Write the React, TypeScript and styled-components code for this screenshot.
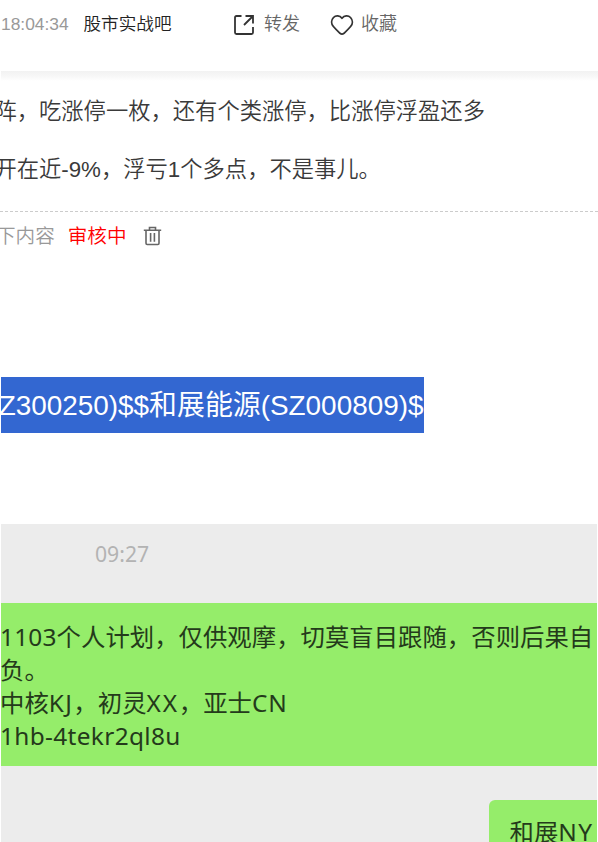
import React from "react";
import styled, { createGlobalStyle } from "styled-components";

const Global = createGlobalStyle`
  body { margin: 0; background: #fff; }
  * { box-sizing: border-box; }
`;

const Page = styled.main`
  display: flex;
  flex-direction: column;
  width: 598px;
  height: 842px;
  overflow: hidden;
  background: #fff;
  font-family: "Liberation Sans", "Noto Sans CJK SC", sans-serif;
  white-space: nowrap;
`;

const Header = styled.header`
  display: flex;
  flex: none;
  height: 71px;
  padding: 10px 0 0 1px;
  font-size: 17.6px;
  line-height: 28px;
  font-weight: 350;
`;

const Time = styled.time`
  width: 82.5px;
  color: #999;
  font-size: 17.4px;
`;

const Source = styled.span`
  width: 149.5px;
  color: #222;
`;

const Action = styled.button<{ $width: number }>`
  display: flex;
  align-items: center;
  flex: none;
  width: ${(p) => p.$width}px;
  height: 28px;
  padding: 0;
  border: 0;
  background: none;
  color: #666;
  font: inherit;
  font-size: 18px;

  svg {
    flex: none;
    margin-top: 1px;
  }
`;

const ActionLabel = styled.span<{ $gap: number }>`
  margin-left: ${(p) => p.$gap}px;
`;

const Divider = styled.div`
  flex: none;
  height: 10px;
  margin-left: 1px;
  background: linear-gradient(#f2f2f2, #f7f7f7 50%, #fff);
`;

const Post = styled.article`
  flex: none;
  height: 131px;
  padding-top: 1px;
  border-bottom: 1px dashed #ccc;
  color: #3a3a3a;
  font-size: 22.3px;
  font-weight: 350;
`;

const Paragraph = styled.p`
  height: 58px;
  margin: 0 0 0 -5.6px;
  line-height: 59px;
`;

const Status = styled.div`
  display: flex;
  align-items: center;
  flex: none;
  height: 48px;
  padding-bottom: 3px;
  margin-left: -4px;
  color: #999;
  font-size: 19.6px;
  font-weight: 350;

  svg { margin: 3px 0 0 16px; }
`;

const Pending = styled.span`
  margin-left: 13px;
  color: #f00;
`;

const Selection = styled.div`
  flex: none;
  width: 423px;
  height: 56px;
  margin: 117px 0 0 1px;
  overflow: hidden;
  background: #3367d1;
  color: #fff;
  font-size: 27.9px;
  line-height: 57px;
  text-indent: -2.3px;
`;

const Chat = styled.section`
  display: flex;
  flex-direction: column;
  flex: none;
  width: 596px;
  height: 318px;
  margin: 91px 0 0 1px;
  background: #ececec;
  color: #243a1b;
  font-family: "Noto Sans", "Noto Sans CJK SC", sans-serif;
`;

const ChatTime = styled.time`
  flex: none;
  height: 79px;
  padding-left: 94px;
  color: #b3b3b3;
  font-size: 21.2px;
  line-height: 60px;
`;

const Message = styled.div`
  flex: none;
  height: 163px;
  padding-top: 16.5px;
  background: #95ed6a;
  font-size: 24.4px;
`;

const MessageLine = styled.div`
  height: 33px;
  margin-left: -1px;
  line-height: 33px;
`;

const Latin = styled.span<{ $spacing?: number }>`
  letter-spacing: ${(p) => p.$spacing ?? 0}px;
`;

const Reply = styled.div`
  align-self: flex-end;
  flex: none;
  width: 108px;
  height: 42px;
  margin-top: 34px;
  padding-left: 20.5px;
  overflow: hidden;
  border-radius: 6px 0 0 0;
  background: #95ed6a;
  font-size: 24.4px;
  line-height: 64px;
`;

const ShareIcon = () => (
  <svg width="22" height="22" viewBox="0 0 22 22" fill="none" stroke="#333" strokeWidth="1.8">
    <path d="M8.5 2H3.5Q2 2 2 3.5v15Q2 20 3.5 20h15q1.5 0 1.5-1.5V13M12.5 2H20v7.5M20 2l-9 9" />
  </svg>
);

const HeartIcon = () => (
  <svg width="24" height="22" viewBox="0 0 24 22" fill="none" stroke="#333" strokeWidth="1.8" strokeLinejoin="round">
    <path d="M12 4.3C9.7 1.2 5.8 1 3.5 3.5 1 6.1 1.1 9.8 3.4 12.5c1.7 2 4.4 4.7 6.6 6.8q2 1.6 4 0c2.2-2.1 4.9-4.8 6.6-6.8 2.3-2.7 2.4-6.4-.1-9C18.2 1 14.3 1.2 12 4.3Z" />
  </svg>
);

const TrashIcon = () => (
  <svg width="19" height="20" viewBox="0 0 19 20" fill="none" stroke="#666" strokeWidth="1.6">
    <path d="M.8 4.3h17.4M6.5 4V1.5h6V4M3 4.5v12.8q0 1.2 1.2 1.2h10.6q1.2 0 1.2-1.2V4.5M7.6 7v8.8M11.4 7v8.8" />
  </svg>
);

export default function App() {
  return (
    <>
      <Global />
      <Page>
        <Header>
          <Time>18:04:34</Time>
          <Source>股市实战吧</Source>
          <Action $width={97}>
            <ShareIcon />
            <ActionLabel $gap={9}>转发</ActionLabel>
          </Action>
          <Action $width={80}>
            <HeartIcon />
            <ActionLabel $gap={7}>收藏</ActionLabel>
          </Action>
        </Header>
        <Divider />
        <Post>
          <Paragraph>阵，吃涨停一枚，还有个类涨停，比涨停浮盈还多</Paragraph>
          <Paragraph>开在近-9%，浮亏1个多点，不是事儿。</Paragraph>
        </Post>
        <Status>
          <span>下内容</span>
          <Pending>审核中</Pending>
          <TrashIcon />
        </Status>
        <Selection>Z300250)$$和展能源(SZ000809)$</Selection>
        <Chat>
          <ChatTime>09:27</ChatTime>
          <Message>
            <MessageLine><Latin $spacing={0.2}>1103</Latin>个人计划，仅供观摩，切莫盲目跟随，否则后果自</MessageLine>
            <MessageLine>负。</MessageLine>
            <MessageLine>中核<Latin $spacing={1.4}>KJ</Latin>，初灵<Latin $spacing={1.8}>XX</Latin>，亚士<Latin $spacing={1}>CN</Latin></MessageLine>
            <MessageLine><Latin $spacing={0.35}>1hb-4tekr2ql8u</Latin></MessageLine>
          </Message>
          <Reply>和展<Latin $spacing={1.5}>NY</Latin></Reply>
        </Chat>
      </Page>
    </>
  );
}
